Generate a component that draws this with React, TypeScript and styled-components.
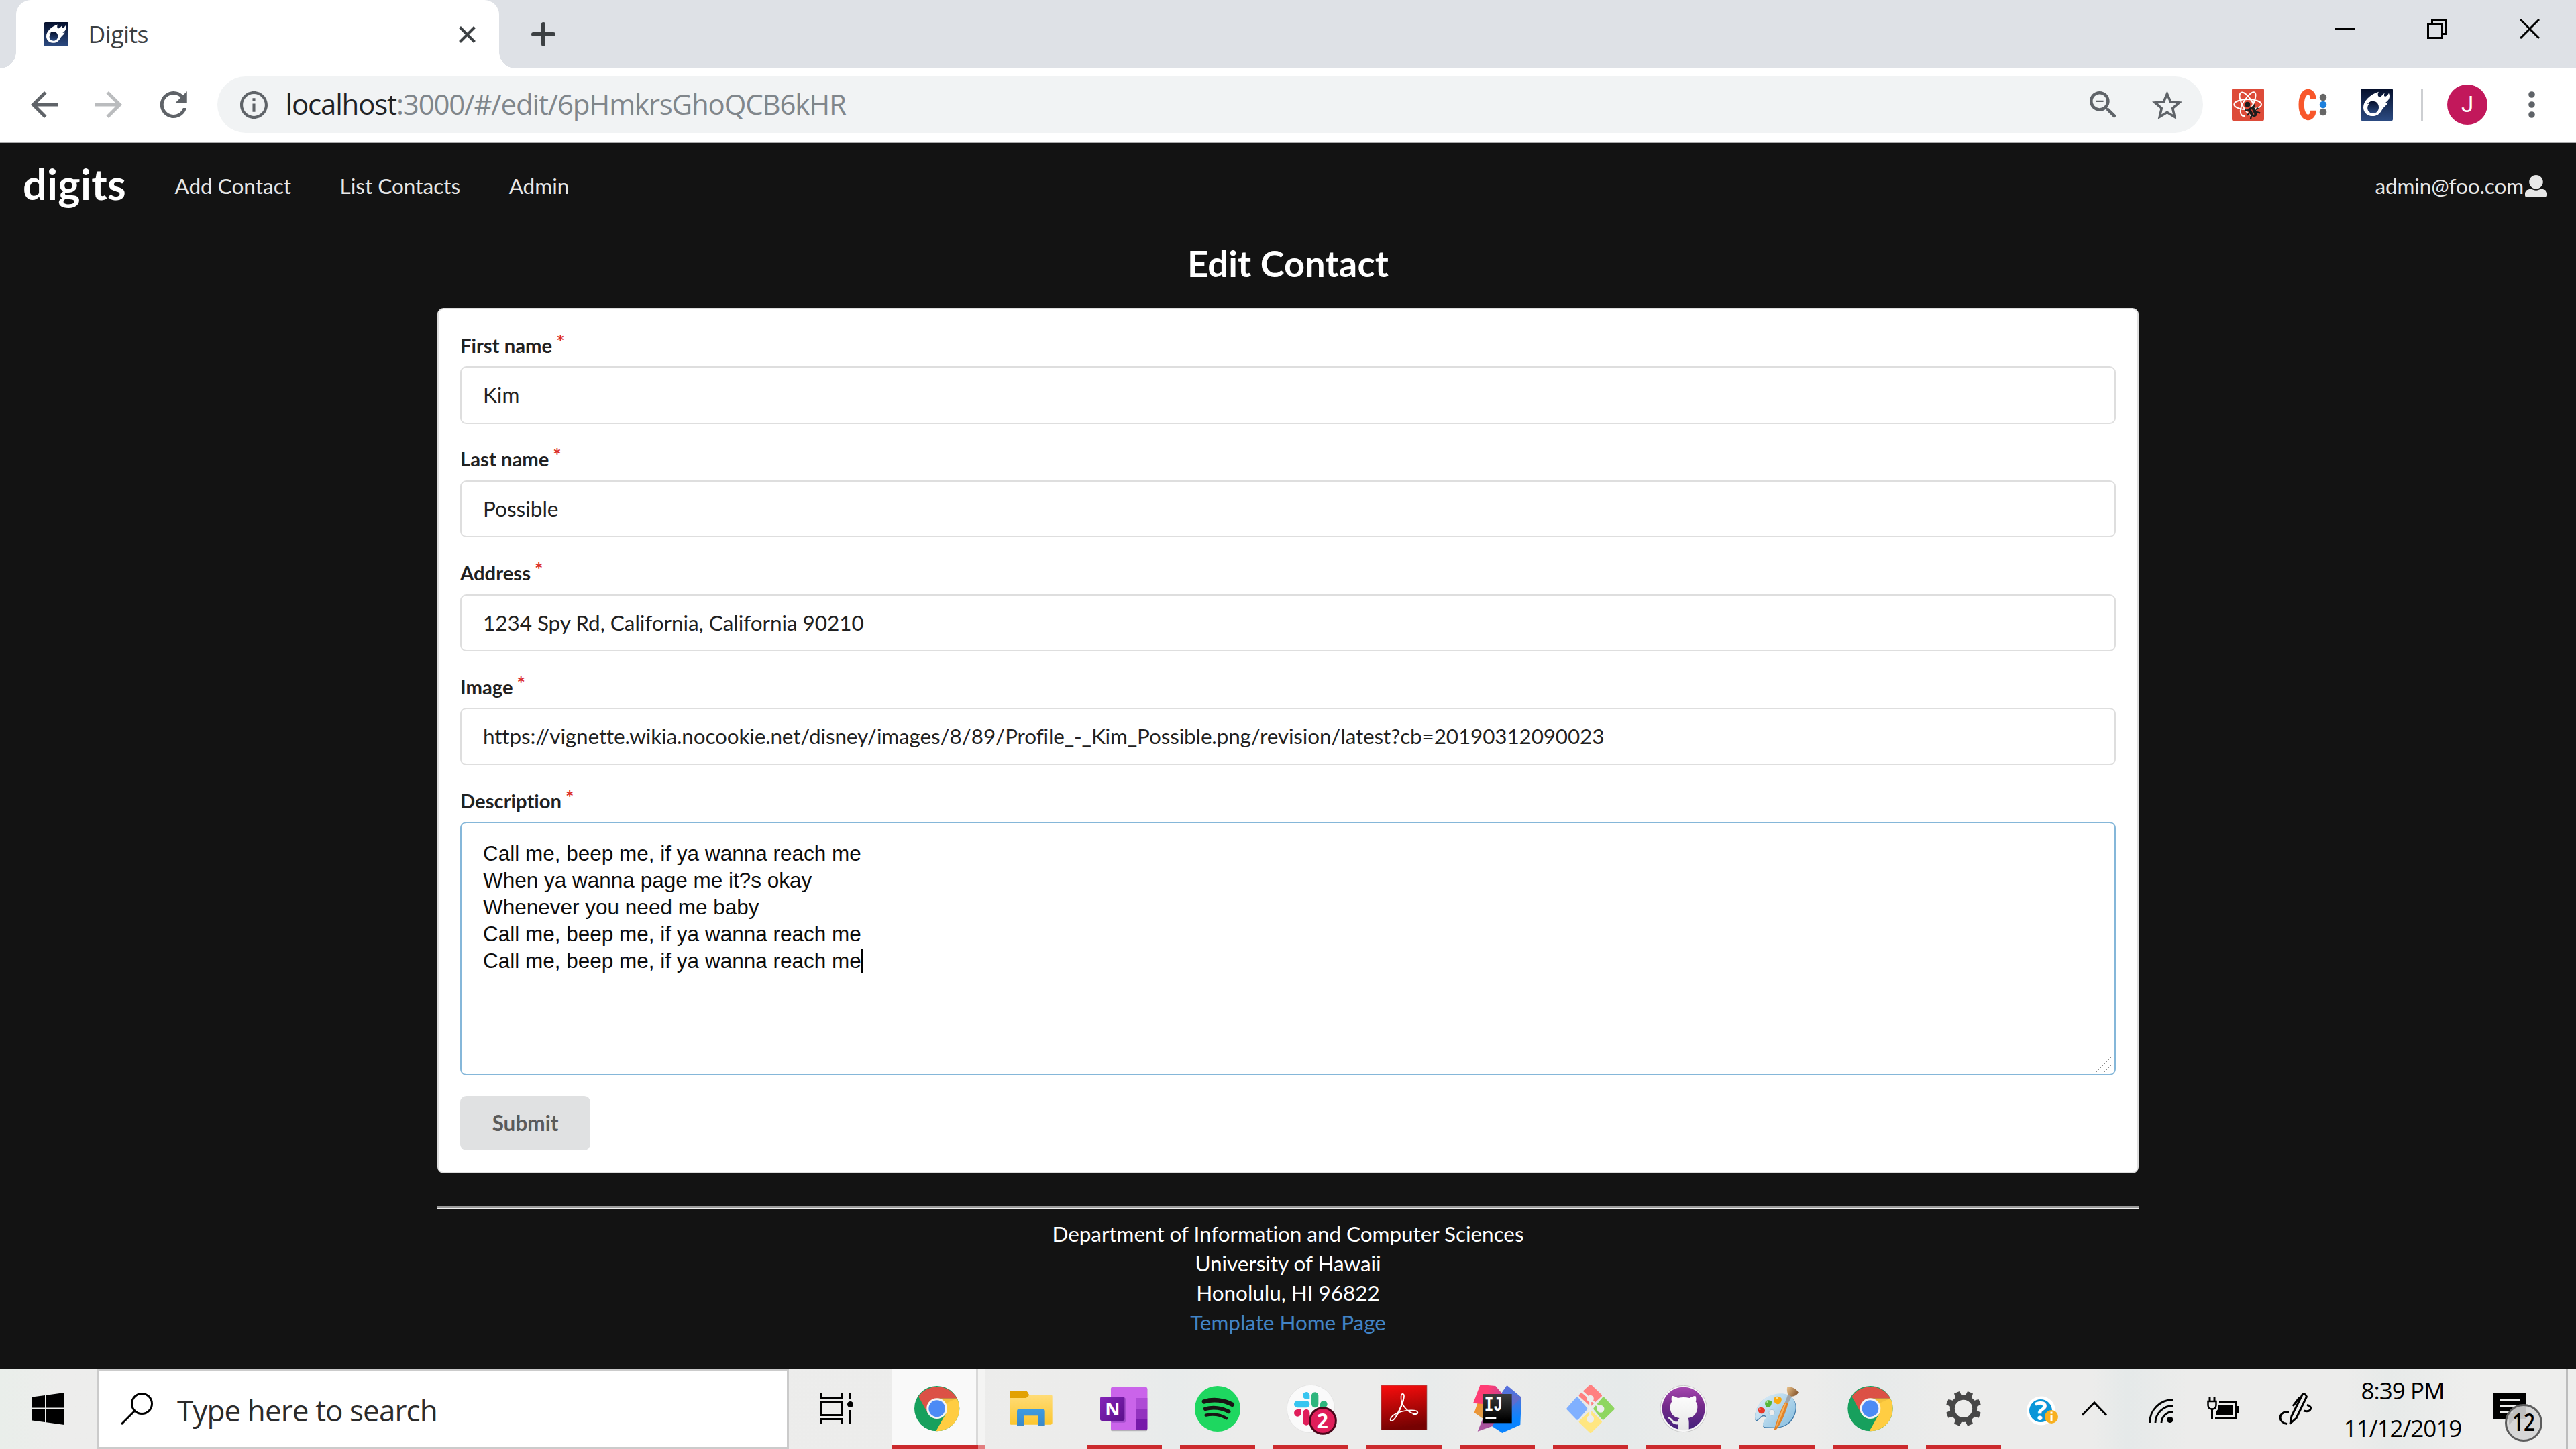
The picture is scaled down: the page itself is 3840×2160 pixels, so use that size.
import React from "react";
import styled, { createGlobalStyle } from "styled-components";

const Global = createGlobalStyle`
  *, *::before, *::after { box-sizing: border-box; }
  html, body { margin: 0; padding: 0; background: #131313; }
  body { width: 3840px; height: 2160px; overflow: hidden; }
  svg { display: block; flex: none; }
`;

const ui = `"Open Sans", "Noto Sans", sans-serif`;
const lato = `Lato, "Liberation Sans", sans-serif`;

const Screen = styled.div`
  width: 3840px;
  height: 2160px;
  display: flex;
  flex-direction: column;
  background: #131313;
`;

/* ---------- browser frame ---------- */

const TabStrip = styled.div`
  height: 102px;
  flex: none;
  display: flex;
  align-items: center;
  background: #dee1e6;
  padding-left: 24px;
`;

const Tab = styled.div`
  position: relative;
  width: 720px;
  height: 102px;
  display: flex;
  align-items: center;
  padding: 0 35px 0 42px;
  background: #fff;
  border-radius: 22px 22px 0 0;
  &::before, &::after {
    content: "";
    position: absolute;
    bottom: 0;
    width: 24px;
    height: 24px;
  }
  &::before {
    left: -24px;
    background: radial-gradient(circle at 0 0, transparent 23.5px, #fff 24px);
  }
  &::after {
    right: -24px;
    background: radial-gradient(circle at 100% 0, transparent 23.5px, #fff 24px);
  }
`;

const TabTitle = styled.span`
  flex: 1;
  margin-left: 29.5px;
  padding-bottom: 3px;
  font: 400 35.5px/50px ${ui};
  letter-spacing: -0.5px;
  color: #3c4043;
`;

const NewTab = styled.div`
  margin-left: 48px;
`;

const WindowControls = styled.div`
  margin-left: auto;
  margin-right: 54px;
  display: flex;
  gap: 107px;
  padding-bottom: 16px;
  svg:last-child {
    margin-left: 1px;
  }
`;

const Toolbar = styled.div`
  height: 111px;
  flex: none;
  display: flex;
  align-items: center;
  padding: 0 0 2px 46px;
  background: #fff;
  border-bottom: 1px solid #a9a9ab;
`;

const NavIcons = styled.div`
  display: flex;
  align-items: center;
  gap: 56px;
`;

const AddressBar = styled.div`
  width: 2960px;
  height: 84px;
  margin-left: 44px;
  padding: 0 31px 0 34px;
  display: flex;
  align-items: center;
  border-radius: 42px;
  background: #f1f3f4;
`;

const Url = styled.span`
  flex: 1;
  margin-left: 26.5px;
  padding-bottom: 3px;
  font: 400 42px/60px ${ui};
  letter-spacing: -1.17px;
  color: #80868b;
`;

const Host = styled.span`
  color: #202124;
`;

const AddressActions = styled.div`
  display: flex;
  align-items: center;
  gap: 53px;
`;

const Extensions = styled.div`
  display: flex;
  align-items: center;
  gap: 50.5px;
  margin-left: 43px;
`;

const Divider = styled.div`
  width: 3px;
  height: 48px;
  margin: 0 36px 0 42px;
  background: #cdcfd2;
`;

const Avatar = styled.div`
  width: 60px;
  height: 60px;
  margin-right: 60px;
  border-radius: 50%;
  background: #c2185b;
  color: #fff;
  font: 400 33px/60px Roboto, sans-serif;
  text-align: center;
`;

/* ---------- page ---------- */

const Page = styled.main`
  height: 1827px;
  flex: none;
  font-family: ${lato};
  font-variant-ligatures: none;
  color: #fff;
`;

const NavBar = styled.nav`
  height: 130px;
  display: flex;
  align-items: center;
  padding: 0 43px 2px 34px;
  font-size: 31.5px;
  color: #e7e7e7;
`;

const Brand = styled.span`
  padding-bottom: 7px;
  margin-right: 72.5px;
  font-size: 63px;
  font-weight: 700;
  letter-spacing: 0.3px;
  line-height: 80px;
  color: #fff;
`;

const NavLink = styled.a`
  margin-right: 72.5px;
  line-height: 45px;
`;

const Account = styled.div`
  margin-left: auto;
  display: flex;
  align-items: center;
  gap: 2px;
  letter-spacing: -0.1px;
  line-height: 45px;
`;

const Column = styled.div`
  width: 2536px;
  margin: 0 auto;
`;

const Title = styled.h2`
  margin: 0 0 17px;
  padding-top: 1px;
  font-size: 54px;
  font-weight: 700;
  letter-spacing: 0.2px;
  line-height: 98px;
  text-align: center;
`;

const Card = styled.form`
  height: 1289.5px;
  padding: 31.5px 32px;
  border: 2px solid #dedede;
  border-radius: 9px;
  background: #fff;
  color: #212121;
`;

const Field = styled.div`
  margin-bottom: 30.8px;
`;

const Label = styled.label`
  display: block;
  height: 44px;
  margin-bottom: 9.5px;
  font-size: 29.25px;
  font-weight: 700;
  line-height: 44px;
  &::after {
    content: "*";
    display: inline-block;
    vertical-align: top;
    margin: -6px 0 0 6px;
    color: #db2828;
  }
`;

const Input = styled.div<{ $tracking: number }>`
  height: 85.5px;
  padding: 0 32px;
  border: 2px solid #dedede;
  border-radius: 9px;
  font-size: 31.5px;
  line-height: 80px;
  letter-spacing: ${(p) => p.$tracking}px;
`;

const TextArea = styled.div`
  position: relative;
  height: 377.5px;
  padding: 24.5px 32px;
  border: 2px solid #85b7d9;
  border-radius: 9px;
  font: 400 31.5px/40px "Liberation Sans", Arial, sans-serif;
  color: #0d0d0d;
  white-space: pre;
`;

const Caret = styled.span`
  display: inline-block;
  width: 3px;
  height: 36px;
  margin: 0 -3px 0 -1px;
  vertical-align: -7px;
  background: #000;
`;

const ResizeGrip = styled.svg`
  position: absolute;
  right: 2px;
  bottom: 2px;
`;

const Submit = styled.button`
  display: block;
  width: 194px;
  height: 81px;
  margin-top: 31.5px;
  padding: 0;
  border: 0;
  border-radius: 9px;
  background: #e0e1e2;
  color: #5a5a5a;
  font: 700 31.5px/81px ${lato};
`;

const Rule = styled.hr`
  height: 4px;
  margin: 49.5px 0 15px;
  border: 0;
  border-top: 2px solid #9a9a9a;
  background: #eeeeee;
`;

const Footer = styled.footer`
  font-size: 31.5px;
  letter-spacing: -0.05px;
  line-height: 44px;
  text-align: center;
`;

const FooterLink = styled.a`
  color: #4183c4;
`;

/* ---------- taskbar ---------- */

const Taskbar = styled.div`
  height: 120px;
  flex: none;
  display: flex;
  align-items: center;
  background: linear-gradient(90deg, #e9eeea 0, #ededec 90px, #ececeb 1650px, #e8ebeb 1750px, #ececeb 1850px,
    #ececeb 2050px, #e8ebeb 2130px, #ececeb 2200px, #e6eaea 2420px, #ececeb 2540px, #ececeb 2700px, #e7eaea 2790px,
    #ececeb 2900px, #ececeb 3120px, #e5e9e9 3170px, #ececeb 3260px, #ececeb 3500px, #e7eae9 3560px, #eeeeed 3680px);
  > * {
    flex: none;
  }
`;

const Start = styled.div`
  width: 144px;
  display: flex;
  justify-content: center;
`;

const SearchBox = styled.div`
  width: 1032px;
  height: 120px;
  display: flex;
  align-items: center;
  gap: 36px;
  padding-left: 33px;
  border: 3px solid #cbcbcb;
  background: #fff;
  font: 400 44px/60px ${ui};
  letter-spacing: -0.9px;
  color: #2b2b2b;
`;

const SearchText = styled.span`
  padding-top: 4px;
`;

const TaskView = styled.div`
  width: 152.5px;
  padding-left: 47px;
`;

const AppSlot = styled.div<{ $active?: boolean; $running?: boolean }>`
  position: relative;
  width: 139px;
  height: 120px;
  display: flex;
  align-items: center;
  justify-content: center;
  background: ${(p) =>
    p.$active ? "linear-gradient(90deg, #f9f9f9 126px, #d9d9d9 126px, #d9d9d9 129px, #f4f4f3 129px)" : "none"};
  &::after {
    content: "";
    position: absolute;
    left: ${(p) => (p.$active ? "0" : "13.5px")};
    bottom: 0;
    width: ${(p) => (p.$active ? "139px" : "112px")};
    height: 6px;
    background: ${(p) =>
      p.$active ? "linear-gradient(90deg, #cb2a2d 129px, #e27d7f 129px)" : p.$running ? "#cb2a2d" : "none"};
  }
`;

const TrayItem = styled.div<{ $gap: number }>`
  margin-left: ${(p) => p.$gap}px;
`;

const Clock = styled.div`
  width: 200px;
  margin-left: 35.5px;
  padding-top: 1px;
  font: 400 35px/56px ${ui};
  letter-spacing: -1px;
  text-align: center;
  color: #000;
`;

const ShowDesktop = styled.div`
  width: 15px;
  height: 120px;
  margin-left: 33px;
  border-left: 3px solid #bdbdbd;
`;

/* ---------- drawings ---------- */

const Material = ({ d, box, w, h, fill = "#5f6368" }: { d: string; box: string; w: number; h: number; fill?: string }) => (
  <svg width={w} height={h} viewBox={box} fill={fill}>
    <path d={d} />
  </svg>
);

const Meteor = ({ size, id }: { size: number; id: string }) => (
  <svg width={size} height={size} viewBox="627 36 144 144">
    <defs>
      <linearGradient id={id} x1="0" y1="0" x2="0" y2="1">
        <stop offset="0" stopColor="#050f2b" />
        <stop offset="1" stopColor="#2c4b82" />
      </linearGradient>
    </defs>
    <rect x="627" y="36" width="144" height="144" rx="6" fill={`url(#${id})`} />
    <path
      fill="#fff"
      d="M639 120C639 92 668 62 708 50C701 60 704 72 711 74C720 72 728 62 735 54C730 64 731 72 737 72C745 70 750 62 753 56C760 72 756 88 736 100L750 98C742 112 728 120 722 132C712 152 696 160 678 159C655 158 639 142 639 120Z"
    />
    <path fill={`url(#${id})`} d="M655 104C664 102 668 90 684 92C700 94 709 106 708 122C706 138 696 147 682 147C666 147 655 134 658 118C659 112 662 106 667 101C662 104 658 105 655 104Z" />
  </svg>
);

const ReactDebug = () => (
  <svg width="48" height="48" viewBox="51 36 144 144">
    <rect x="51" y="36" width="144" height="144" rx="6" fill="#dd4b39" />
    <g fill="none" stroke="#fff" strokeWidth="6">
      <ellipse cx="122" cy="107" rx="61" ry="23" />
      <ellipse cx="122" cy="107" rx="61" ry="23" transform="rotate(60 122 107)" />
      <path d="M110 159C80 162 86 120 107 90C124 62 146 46 154 54C162 62 155 92 140 118" />
    </g>
    <circle cx="121" cy="107" r="12" fill="#1c1c1c" />
    <g transform="rotate(-32 143 137)" fill="#1c1c1c" stroke="#1c1c1c" strokeWidth="7">
      <path stroke="none" d="M127 118H159V148C159 170 127 170 127 148Z" />
      <path fill="none" d="M128 124L118 116M126 139H113M128 152L118 162M158 124L168 116M160 139H173M158 152L168 162" />
    </g>
    <path d="M139 130L150 152" stroke="#dd4b39" strokeWidth="4" />
  </svg>
);

const Chrome = ({ box, id }: { box: string; id: string }) => (
  <svg width="100" height="100" viewBox={box}>
    <defs>
      <linearGradient id={id} x1="0" y1="0" x2="0" y2="1">
        <stop offset="0" stopColor="#db5045" />
        <stop offset="1" stopColor="#dd5347" />
      </linearGradient>
    </defs>
    <circle cx="984" cy="149" r="101" fill="#17a05d" />
    <path fill={`url(#${id})`} d="M902 96A101 101 0 0 1 1074 104H984L944 172Z" />
    <path fill="#ffcd42" d="M1074 104A101 101 0 0 1 980 250L1024 172L984 104Z" />
    <path fill="#d9a62a" opacity=".35" d="M1000 104H1073L1024 126Z" />
    <circle cx="984" cy="149" r="46" fill="#f4f4f4" />
    <circle cx="984" cy="149" r="37" fill="#4c8bf5" />
  </svg>
);

const Folder = () => (
  <svg width="100" height="100" viewBox="0 0 300 300">
    <defs>
      <linearGradient id="fold" x1="0" y1="0" x2="0" y2="1">
        <stop offset="0" stopColor="#ffdc78" />
        <stop offset="1" stopColor="#fcc62f" />
      </linearGradient>
      <linearGradient id="foldBlue" x1="0" y1="0" x2="0" y2="1">
        <stop offset="0" stopColor="#3d9ce2" />
        <stop offset="1" stopColor="#3a88c8" />
      </linearGradient>
    </defs>
    <path fill="#e2a102" d="M60 70H126Q131 70 134 75L144 92V110H54V76Q54 70 60 70Z" />
    <path fill="url(#fold)" d="M54 102H128L144 87H238Q245 87 245 94V214Q245 221 238 221H60Q54 221 54 214Z" />
    <path fill="url(#foldBlue)" d="M87 228V162Q87 150 98 150H201Q212 150 212 162V228H181V181H117V228Z" />
  </svg>
);

const OneNote = () => (
  <svg width="100" height="100" viewBox="0 0 300 300">
    <defs>
      <linearGradient id="note" x1="0" y1="0" x2="1" y2="1">
        <stop offset="0" stopColor="#8424b8" />
        <stop offset="1" stopColor="#5c108c" />
      </linearGradient>
    </defs>
    <rect x="90" y="58" width="163" height="192" rx="6" fill="#b5b2b8" />
    <rect x="90" y="54" width="163" height="191" rx="6" fill="#ca64ea" />
    <rect x="203" y="102" width="50" height="48" fill="#ae4bd5" />
    <rect x="203" y="150" width="50" height="48" fill="#9332bf" />
    <path d="M203 198H253V239Q253 245 247 245H203Z" fill="#7719aa" />
    <rect x="90" y="100" width="66" height="112" rx="8" fill="#a44ecb" />
    <rect x="42" y="96" width="109" height="108" rx="8" fill="url(#note)" />
    <text x="97" y="180" textAnchor="middle" fontFamily={ui} fontWeight="700" fontSize="82" fill="#fff">N</text>
  </svg>
);

const Spotify = () => (
  <svg width="100" height="100" viewBox="0 0 300 300">
    <circle cx="150" cy="150" r="102" fill="#1ed760" />
    <g fill="none" stroke="#191414" strokeLinecap="round">
      <path strokeWidth="20" d="M90 118C130 106 180 111 215 131" />
      <path strokeWidth="17" d="M95 151C130 141 170 146 200 163" />
      <path strokeWidth="13" d="M98 179C130 172 160 175 190 193" />
    </g>
  </svg>
);

const Slack = () => (
  <svg width="100" height="100" viewBox="12 0 300 300">
    <circle cx="162" cy="150" r="107" fill="#fafafa" stroke="#dcdcdc" strokeWidth="2" />
    <path fill="#36c5f0" d="M102 115H142A15 15 0 0 1 142 145H102A15 15 0 0 1 102 115ZM142 75A15 15 0 0 1 157 90V107H142A16 16 0 0 1 142 75Z" />
    <path fill="#2eb67d" d="M165 91A15.500 15.500 0 0 1 196 91V129A15.500 15.500 0 0 1 165 129ZM204 130A16 16 0 0 1 236 130A15 15 0 0 1 221 145H204Z" />
    <path fill="#e01e5a" d="M119 153V170A16 16 0 1 1 103 153ZM127 168A15 15 0 0 1 157 168V209A15 15 0 0 1 127 209Z" />
    <circle cx="216" cy="204" r="58" fill="#e01e5a" stroke="#4a0519" strokeWidth="9" />
    <text x="214" y="237" textAnchor="middle" fontFamily={ui} fontWeight="700" fontSize="90" fill="#fff">2</text>
  </svg>
);

const Acrobat = () => (
  <svg width="100" height="100" viewBox="429 0 300 300">
    <defs>
      <linearGradient id="acro" x1="0" y1="0" x2="0.15" y2="1">
        <stop offset="0" stopColor="#fb0d0d" />
        <stop offset="1" stopColor="#760202" />
      </linearGradient>
    </defs>
    <rect x="477" y="45" width="204" height="199" fill="url(#acro)" stroke="#8d6e6e" strokeWidth="2" />
    <path
      fill="none"
      stroke="#fff"
      strokeWidth="5"
      d="M575 84C564 80 563 104 569 122C579 148 605 172 632 173C645 173 643 160 625 158C600 155 563 161 543 172C522 183 512 200 521 204C535 207 556 166 568 135C577 110 584 88 575 84Z"
    />
    <path stroke="#fff" strokeWidth="7" fill="none" d="M576 108C572 130 556 162 544 184M618 172C628 175 638 174 639 168" />
  </svg>
);

const IntelliJ = () => (
  <svg width="100" height="100" viewBox="846 0 300 300">
    <defs>
      <linearGradient id="ijBlue" x1="0.3" y1="0" x2="0.4" y2="1">
        <stop offset="0" stopColor="#5a6fdc" />
        <stop offset="0.35" stopColor="#4a74dc" />
        <stop offset="0.75" stopColor="#0a84ff" />
      </linearGradient>
      <linearGradient id="ijPink" x1="0" y1="0" x2="1" y2="0.3">
        <stop offset="0.5" stopColor="#ff3d74" />
        <stop offset="1" stopColor="#c8418f" />
      </linearGradient>
      <linearGradient id="ijOrange" x1="0" y1="0" x2="1" y2="1">
        <stop offset="0" stopColor="#fb8c1e" />
        <stop offset="1" stopColor="#d3a35a" />
      </linearGradient>
      <linearGradient id="ijBlack" x1="0" y1="0" x2="0" y2="1">
        <stop offset="0" stopColor="#3c3c3c" />
        <stop offset="0.9" stopColor="#000" />
      </linearGradient>
    </defs>
    <path fill="url(#ijOrange)" d="M908 124L940 130V200L893 167Z" />
    <path fill="#a9529d" d="M908 251L932 192L1000 205L974 228Z" />
    <path fill="url(#ijBlue)" d="M1039 45L1104 99L1099 222L1018 258L972 228L1000 190L1030 110L1012 84Z" />
    <path fill="#6a6ac6" opacity=".7" d="M1104 99L1061 142V84Z" />
    <path fill="url(#ijPink)" d="M920 42L988 48L1024 90L940 130L888 125Z" />
    <rect x="930" y="84" width="131" height="130" fill="url(#ijBlack)" />
    <text x="938" y="158" textLength="82" lengthAdjust="spacingAndGlyphs" fontFamily={`"Liberation Mono", monospace`} fontWeight="700" fontSize="88" fill="#fff">IJ</text>
    <rect x="943" y="188" width="48" height="10" fill="#fff" />
  </svg>
);

const Git = () => (
  <svg width="100" height="100" viewBox="1263 0 300 300">
    <g strokeLinejoin="round" strokeWidth="12">
      <path fill="#80b0ff" stroke="#80b0ff" d="M1353 104L1393 150L1354 194L1312 150Z" />
      <path fill="#8ed660" stroke="#8ed660" d="M1471 104L1514 150L1469 194L1432 150Z" />
      <path fill="#ffe681" stroke="#ffe681" d="M1413 164L1458 208L1413 252L1367 208Z" />
      <path fill="#ff8080" stroke="#ff8080" d="M1413 48L1458 91L1413 132L1367 91Z" />
    </g>
    <g stroke="#ecedec" strokeWidth="9" fill="#ecedec">
      <path d="M1362 62L1412 106L1460 152M1412 105V195" />
      <circle cx="1412" cy="105" r="11" />
      <circle cx="1458" cy="151" r="12" />
      <circle cx="1412" cy="196" r="12" />
    </g>
  </svg>
);

const GitHub = () => (
  <svg width="100" height="100" viewBox="0 0 300 300">
    <defs>
      <linearGradient id="gh" x1="0" y1="0" x2="0" y2="1">
        <stop offset="0" stopColor="#a446ae" />
        <stop offset="0.45" stopColor="#742a8a" />
        <stop offset="1" stopColor="#43227c" />
      </linearGradient>
      <linearGradient id="ghCat" x1="0" y1="0" x2="0" y2="1">
        <stop offset="0" stopColor="#fdfdfd" />
        <stop offset="1" stopColor="#e6e6e6" />
      </linearGradient>
    </defs>
    <circle cx="149" cy="150" r="104" fill="#f7f7f7" stroke="#b4b4b4" strokeWidth="2" />
    <circle cx="149" cy="149" r="96" fill="url(#gh)" />
    <path
      fill="url(#ghCat)"
      d="M98 93C106 92 114 97 124 102C141 98 159 98 176 102C187 96 196 92 202 93C206 100 206 112 203 118C209 125 212 135 211 145C209 172 196 188 168 192C172 197 173 203 173 212V244C160 248 140 248 125 244V220C112 221 103 217 97 210C92 203 88 196 80 193C79 189 82 187 88 190C98 194 100 203 108 206C115 208 121 208 125 206C125 199 127 195 131 192C103 188 90 172 89 145C89 135 91 125 97 118C94 112 94 100 98 93Z"
    />
  </svg>
);

const Paint = () => (
  <svg width="100" height="100" viewBox="417 0 300 300">
    <defs>
      <linearGradient id="pal" x1="0" y1="0" x2="1" y2="0.8">
        <stop offset="0" stopColor="#e4f2fa" />
        <stop offset="1" stopColor="#8cc0e0" />
      </linearGradient>
      <linearGradient id="brush" x1="0" y1="0" x2="1" y2="0.5">
        <stop offset="0" stopColor="#edc58c" />
        <stop offset="1" stopColor="#8a5a30" />
      </linearGradient>
    </defs>
    <path
      fill="#3f79a8"
      d="M469 198C464 150 498 86 585 84C630 84 654 112 653 148C650 200 612 236 565 236L515 236C494 232 508 208 518 193C517 180 500 180 490 196L478 205C473 205 470 202 469 198Z"
    />
    <path
      fill="url(#pal)"
      d="M469 195C464 150 498 84 585 82C628 82 651 110 650 145C647 196 610 233 563 233L515 232C494 228 508 204 518 189C517 176 500 176 488 192L476 201C471 201 470 199 469 195Z"
    />
    <circle cx="544" cy="167" r="13" fill="#ededec" stroke="#8fb6cf" strokeWidth="2" />
    <path fill="#e8392b" d="M484 148C492 138 510 144 513 156C514 168 504 174 495 172C484 170 480 158 484 148Z" />
    <path fill="#57b63a" d="M516 118C524 108 538 112 543 118C544 132 538 144 526 144C514 142 510 128 516 118Z" />
    <path fill="#f9a90e" d="M556 100C564 92 582 94 587 104C590 118 580 130 568 130C554 126 548 110 556 100Z" />
    <circle cx="490" cy="152" r="4" fill="#f9a49c" />
    <circle cx="524" cy="120" r="4" fill="#b5e6a2" />
    <circle cx="566" cy="102" r="5" fill="#ffdf8c" />
    <path fill="#a0a4a8" d="M616 86L634 94L616 126L603 121Z" />
    <path fill="url(#brush)" d="M613 52C635 50 655 62 663 78C655 90 642 96 633 95L616 88C613 76 609 64 613 52Z" />
    <path fill="#e0832a" d="M602 122C608 121 614 124 616 128C606 170 580 225 563 244C558 247 554 244 555 240C564 208 584 150 602 122Z" />
    <path fill="#f7b25c" d="M603 126L607 128C594 168 574 212 561 238C568 206 588 154 603 126Z" />
  </svg>
);

const Gear = () => (
  <svg width="100" height="100" viewBox="1251 0 300 300">
    <circle cx="1401" cy="149.500" r="50" fill="none" stroke="#474747" strokeWidth="21" />
    {[0, 1, 2, 3, 4, 5, 6, 7].map((k) => (
      <path
        key={k}
        fill="#474747"
        stroke="#474747"
        strokeWidth="4"
        strokeLinejoin="round"
        d="M1388 96L1390 73H1412L1414 96Z"
        transform={`rotate(${22.5 + 45 * k} 1401 149.500)`}
      />
    ))}
  </svg>
);

/* ---------- data ---------- */

const fields = [
  { label: "First name", value: "Kim", tracking: 0 },
  { label: "Last name", value: "Possible", tracking: 0 },
  { label: "Address", value: "1234 Spy Rd, California, California 90210", tracking: -0.05 },
  {
    label: "Image",
    value:
      "https://vignette.wikia.nocookie.net/disney/images/8/89/Profile_-_Kim_Possible.png/revision/latest?cb=20190312090023",
    tracking: -0.15,
  },
];

const description = [
  "Call me, beep me, if ya wanna reach me",
  "When ya wanna page me it?s okay",
  "Whenever you need me baby",
  "Call me, beep me, if ya wanna reach me",
  "Call me, beep me, if ya wanna reach me",
].join("\n");

const apps = [OneNote, Spotify, Slack, Acrobat, IntelliJ, Git, GitHub, Paint];

export default function App() {
  return (
    <Screen>
      <Global />
      <TabStrip>
        <Tab>
          <Meteor size={36} id="meteorTab" />
          <TabTitle>Digits</TabTitle>
          <svg width="25" height="25" viewBox="0 0 25 25" stroke="#3c4043" strokeWidth="4">
            <path d="M1.500 1.500L23.500 23.500M23.500 1.500L1.500 23.500" />
          </svg>
        </Tab>
        <NewTab>
          <svg width="36" height="36" viewBox="0 0 36 36" stroke="#3c4043" strokeWidth="6" strokeLinecap="round">
            <path d="M18 3V33M3 18H33" />
          </svg>
        </NewTab>
        <WindowControls>
          <svg width="30" height="30" viewBox="0 0 30 30">
            <path d="M0 14H30V17H0Z" />
          </svg>
          <svg width="30" height="30" viewBox="0 0 30 30" fill="none" stroke="#000" strokeWidth="3">
            <path d="M1.500 7.500H22.500V28.500H1.500ZM7.500 7.500V1.500H28.500V22.500H22.500" />
          </svg>
          <svg width="30" height="30" viewBox="0 0 30 30" stroke="#000" strokeWidth="3">
            <path d="M1 1L29 29M29 1L1 29" />
          </svg>
        </WindowControls>
      </TabStrip>

      <Toolbar>
        <NavIcons>
          <Material w={40} h={40} box="4 4 16 16" d="M20 11H7.830l5.590-5.590L12 4l-8 8 8 8 1.410-1.410L7.830 13H20v-2z" />
          <Material w={40} h={40} box="4 4 16 16" fill="#babcbe" d="M12 4l-1.410 1.410L16.170 11H4v2h12.170l-5.580 5.590L12 20l8-8z" />
          <Material
            w={42}
            h={40}
            box="4 4 16.200 16"
            d="M17.650 6.350C16.200 4.900 14.210 4 12 4c-4.420 0-7.990 3.580-7.990 8s3.570 8 7.990 8c3.730 0 6.840-2.550 7.730-6h-2.080c-.82 2.330-3.040 4-5.650 4-3.310 0-6-2.690-6-6s2.690-6 6-6c1.660 0 3.140.69 4.220 1.780L13 11h7V4l-2.350 2.350z"
          />
        </NavIcons>
        <AddressBar>
          <Material
            w={41}
            h={41}
            box="2 2 20 20"
            d="M11 17h2v-6h-2v6zm1-15C6.480 2 2 6.480 2 12s4.480 10 10 10 10-4.480 10-10S17.520 2 12 2zm0 18c-4.410 0-8-3.590-8-8s3.590-8 8-8 8 3.590 8 8-3.590 8-8 8zM11 9h2V7h-2v2z"
          />
          <Url>
            <Host>localhost</Host>:3000/#/edit/6pHmkrsGhoQCB6kHR
          </Url>
          <AddressActions>
            <Material
              w={40}
              h={40}
              box="3 3 17.500 17.500"
              d="M15.500 14h-.79l-.28-.27C15.410 12.590 16 11.110 16 9.500 16 5.910 13.090 3 9.500 3S3 5.910 3 9.500 5.910 16 9.500 16c1.610 0 3.090-.59 4.230-1.570l.27.28v.79l5 4.990L20.490 19l-4.990-5zm-6 0C7.010 14 5 11.990 5 9.500S7.010 5 9.500 5 14 7.010 14 9.500 11.990 14 9.500 14zM7 9h5v1H7z"
            />
            <Material
              w={45}
              h={43}
              box="2 2 20 19"
              d="M22 9.240l-7.190-.62L12 2 9.190 8.630 2 9.240l5.460 4.730L5.820 21 12 17.270 18.180 21l-1.630-7.030L22 9.240zM12 15.400l-3.760 2.270 1-4.280-3.320-2.880 4.380-.38L12 6.100l1.710 4.040 4.380.38-3.320 2.880 1 4.280L12 15.400z"
            />
          </AddressActions>
        </AddressBar>
        <Extensions>
          <ReactDebug />
          <svg width="43" height="48" viewBox="347 36 129 144">
            <path d="M414 82C414 40 361 34 361 108C361 182 414 176 414 134" fill="none" stroke="#f8572b" strokeWidth="25" />
            <circle cx="458" cy="75" r="16" fill="#666" />
            <circle cx="458" cy="108" r="16" fill="#1e80dc" />
            <circle cx="458" cy="141" r="16" fill="#666" />
          </svg>
          <Meteor size={48} id="meteorExt" />
        </Extensions>
        <Divider />
        <Avatar>J</Avatar>
        <svg width="12" height="40" viewBox="0 0 12 40" fill="#5f6368">
          <circle cx="6" cy="5" r="4.800" />
          <circle cx="6" cy="20" r="4.800" />
          <circle cx="6" cy="35" r="4.800" />
        </svg>
      </Toolbar>

      <Page>
        <NavBar>
          <Brand>digits</Brand>
          <NavLink>Add Contact</NavLink>
          <NavLink>List Contacts</NavLink>
          <NavLink>Admin</NavLink>
          <Account>
            admin@foo.com
            <Material
              w={33}
              h={33}
              box="0 0 512 512"
              fill="#e7e7e7"
              d="M256 0c88.366 0 160 71.634 160 160s-71.634 160-160 160S96 248.366 96 160 167.634 0 256 0zm183.283 333.821l-71.313-17.828c-74.923 53.890-165.738 41.864-223.940 0l-71.313 17.828C29.981 344.505 0 382.903 0 426.955V464c0 26.510 21.490 48 48 48h416c26.510 0 48-21.490 48-48v-37.045c0-44.052-29.981-82.450-72.717-93.134z"
            />
          </Account>
        </NavBar>
        <Column>
          <Title>Edit Contact</Title>
          <Card>
            {fields.map((f) => (
              <Field key={f.label}>
                <Label>{f.label}</Label>
                <Input $tracking={f.tracking}>{f.value}</Input>
              </Field>
            ))}
            <Field>
              <Label>Description</Label>
              <TextArea>
                {description}
                <Caret />
                <ResizeGrip width="26" height="26" viewBox="0 0 26 26" stroke="#8a8a8a" strokeWidth="1">
                  <path d="M1 25L25 1M13 25L25 13" />
                </ResizeGrip>
              </TextArea>
            </Field>
            <Submit type="button">Submit</Submit>
          </Card>
          <Rule />
          <Footer>
            <div>Department of Information and Computer Sciences</div>
            <div>University of Hawaii</div>
            <div>Honolulu, HI 96822</div>
            <FooterLink>Template Home Page</FooterLink>
          </Footer>
        </Column>
      </Page>

      <Taskbar>
        <Start>
          <svg width="48" height="48" viewBox="0 0 48 48">
            <path d="M0 6.500L19 4V22.500H0ZM21 3.700L48 0V22.500H21ZM0 24.500H19V44L0 41.500ZM21 24.500H48V48L21 44.300Z" />
          </svg>
        </Start>
        <SearchBox>
          <svg width="48" height="48" viewBox="0 0 48 48" fill="none" stroke="#000" strokeWidth="3">
            <circle cx="31.500" cy="16.500" r="15" />
            <path d="M21 27L1 47" />
          </svg>
          <SearchText>Type here to search</SearchText>
        </SearchBox>
        <TaskView>
          <svg width="48" height="46" viewBox="0 0 48 46" fill="none" stroke="#000" strokeWidth="3">
            <path d="M1.500 0V7.500H32.500V0M1.500 13.500H32.500V32.500H1.500ZM1.500 46V38.500H32.500V46M44.500 0V8M44.500 25V46" />
            <circle cx="44.500" cy="16.500" r="4.500" fill="#000" stroke="none" />
          </svg>
        </TaskView>
        <AppSlot $active>
          <Chrome box="838 0 300 300" id="chromeA" />
        </AppSlot>
        <AppSlot>
          <Folder />
        </AppSlot>
        {apps.map((Icon, i) => (
          <AppSlot key={i} $running>
            <Icon />
          </AppSlot>
        ))}
        <AppSlot $running>
          <Chrome box="834 0 300 300" id="chromeB" />
        </AppSlot>
        <AppSlot $running>
          <Gear />
        </AppSlot>

        <TrayItem $gap={24.5}>
          <svg width="47" height="100" viewBox="3021 2050 47 100">
            <circle cx="3042.500" cy="2103" r="21.500" fill="#fff" />
            <circle cx="3042" cy="2103" r="17" fill="#0996d8" />
            <text x="3042" y="2117" textAnchor="middle" fontFamily={ui} fontWeight="700" fontSize="40" fill="#fff">?</text>
            <circle cx="3058" cy="2112" r="10" fill="#f8b01f" />
            <path d="M3058 2110V2118M3058 2104.500V2107.500" stroke="#fff" strokeWidth="3" />
          </svg>
        </TrayItem>
        <TrayItem $gap={35}>
          <svg width="38" height="100" viewBox="3103 2050 38 100">
            <path d="M3104 2109.500L3122 2091L3140 2109.500" fill="none" stroke="#000" strokeWidth="3" />
          </svg>
        </TrayItem>
        <TrayItem $gap={62}>
          <svg width="37" height="100" viewBox="3203 2050 37 100" fill="none" stroke="#000" strokeWidth="2.800">
            <path d="M3204.500 2121C3204.500 2102 3220 2086.500 3239 2086.500M3213 2121C3213 2107 3225 2095.500 3239 2095.500M3222 2121C3222 2112 3230 2104.500 3239 2104.500" />
            <circle cx="3234.800" cy="2116.500" r="4.600" fill="#000" stroke="none" />
          </svg>
        </TrayItem>
        <TrayItem $gap={50}>
          <svg width="48" height="100" viewBox="3290 2050 48 100" fill="none" stroke="#000" strokeWidth="3">
            <path d="M3308 2089.500H3333.500V2113.500H3302" />
            <path d="M3307 2094H3329V2109H3303V2104Q3307 2102 3307 2097Z" fill="#000" stroke="none" />
            <path d="M3336.500 2096V2106M3294 2082V2089M3301 2082V2089M3297.500 2101V2115" />
            <path d="M3291.500 2089H3303.500V2095Q3303 2100.500 3297.500 2100.500Q3292 2100.500 3291.500 2095Z" strokeWidth="2.500" />
          </svg>
        </TrayItem>
        <TrayItem $gap={60}>
          <svg width="48" height="100" viewBox="3398 2050 48 100" fill="none" stroke="#000" strokeWidth="3" strokeLinejoin="round">
            <path d="M3414 2122L3416 2111L3432 2079Q3436 2076 3438.500 2082L3423 2114Z" />
            <path d="M3428 2083L3418 2096M3412 2104.500H3408C3396 2106 3396 2121 3409 2122.500M3434 2103C3446 2106 3448 2096 3439 2094.500" />
          </svg>
        </TrayItem>
        <Clock>
          <div>8:39 PM</div>
          <div>11/12/2019</div>
        </Clock>
        <TrayItem $gap={35.5}>
          <svg width="75" height="100" viewBox="3717 2050 75 100">
            <path d="M3717 2076H3765V2115H3749L3740 2124V2115H3717Z" />
            <path d="M3726 2086.500H3756M3726 2095.500H3756M3726 2104.500H3746" stroke="#ececeb" strokeWidth="3" />
            <circle cx="3762" cy="2121" r="26.500" fill="#d4d4d4" fillOpacity=".9" stroke="#5c5c5c" strokeWidth="3" />
            <text x="3745" y="2133" textLength="34" lengthAdjust="spacingAndGlyphs" fontFamily={ui} fontWeight="600" fontSize="36">12</text>
          </svg>
        </TrayItem>
        <ShowDesktop />
      </Taskbar>
    </Screen>
  );
}
